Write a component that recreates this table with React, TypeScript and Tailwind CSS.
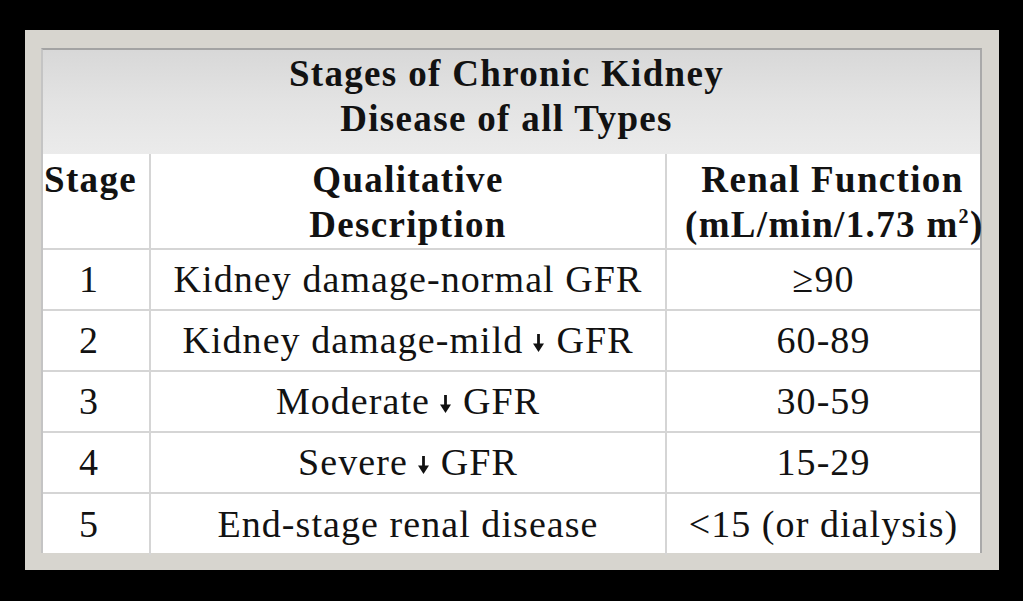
const rows = [
  { stage: '1', desc: 'Kidney damage-normal GFR', arrow: false, gfr: '≥90' },
  { stage: '2', desc: 'Kidney damage-mild', arrow: true, gfr: '60-89' },
  { stage: '3', desc: 'Moderate', arrow: true, gfr: '30-59' },
  { stage: '4', desc: 'Severe', arrow: true, gfr: '15-29' },
  { stage: '5', desc: 'End-stage renal disease', arrow: false, gfr: '<15 (or dialysis)' },
]

function DownArrow() {
  return (
    <svg width="13" height="22" viewBox="0 0 13 22" className="inline-block ml-[9px] mr-[11px] -mb-[2px]">
      <path d="M6.5 3 V14" stroke="#111" strokeWidth="2.8" />
      <path d="M1 12.5 L12 12.5 L6.5 21 Z" fill="#111" />
    </svg>
  )
}

export default function App() {
  return (
    <div className="w-[1023px] h-[601px] bg-black pt-[30px] pl-[25px] overflow-hidden">
      <div className="w-[974px] h-[540px] bg-[#d7d5cf] pt-[18px] pl-[16px]">
        <div
          className="w-[941px] h-[505px] bg-white border-l-2 border-r-2 border-t-2 border-l-[#c4c4c4] border-r-[#a9a9a9] border-t-[#a3a3a3] text-[#121212]"
          style={{ fontFamily: '"Liberation Serif", "DejaVu Serif", serif' }}
        >
          <div className="h-[104px] bg-gradient-to-b from-[#d8d8d8] via-[#e3e3e3] to-[#ebebeb] flex flex-col items-center justify-center pb-[12px] pr-[10px] text-[37px] font-bold leading-[45px] tracking-[0.036em]">
            <div>Stages of Chronic Kidney</div>
            <div>Disease of all Types</div>
          </div>
          <div className="grid grid-cols-[108px_516px_313px] text-[38px] leading-[45px] tracking-[0.028em]">
            <div className="h-[96px] border-r-2 border-b-2 border-[#d5d5d5] font-bold pl-[1px] pt-[3px] text-[37px] tracking-[0.036em]">Stage</div>
            <div className="h-[96px] border-r-2 border-b-2 border-[#d5d5d5] font-bold text-center pt-[3px] text-[37px] tracking-[0.036em]">
              <div>Qualitative</div>
              <div>Description</div>
            </div>
            <div className="h-[96px] border-b-2 border-[#d5d5d5] font-bold text-center pt-[3px] pl-[18px] whitespace-nowrap text-[37px] tracking-[0.036em]">
              <div>Renal Function</div>
              <div>
                (mL/min/1.73 m<sup className="text-[20px] relative -top-[14px]">2</sup>)
              </div>
            </div>
            {rows.map((r, i) => (
              <div key={r.stage} className="contents">
                <div className={`h-[61px] border-r-2 border-[#d5d5d5] flex items-center justify-center pr-[14px] ${i < 4 ? 'border-b-2' : ''}`}>
                  {r.stage}
                </div>
                <div className={`h-[61px] border-r-2 border-[#d5d5d5] flex items-center justify-center ${i < 4 ? 'border-b-2' : ''}`}>
                  <span>{r.desc}</span>
                  {r.arrow && (
                    <>
                      <DownArrow />
                      <span>GFR</span>
                    </>
                  )}
                </div>
                <div className={`h-[61px] border-[#d5d5d5] flex items-center justify-center whitespace-nowrap ${i < 4 ? 'border-b-2' : ''}`}>
                  {r.gfr}
                </div>
              </div>
            ))}
          </div>
        </div>
      </div>
    </div>
  )
}
